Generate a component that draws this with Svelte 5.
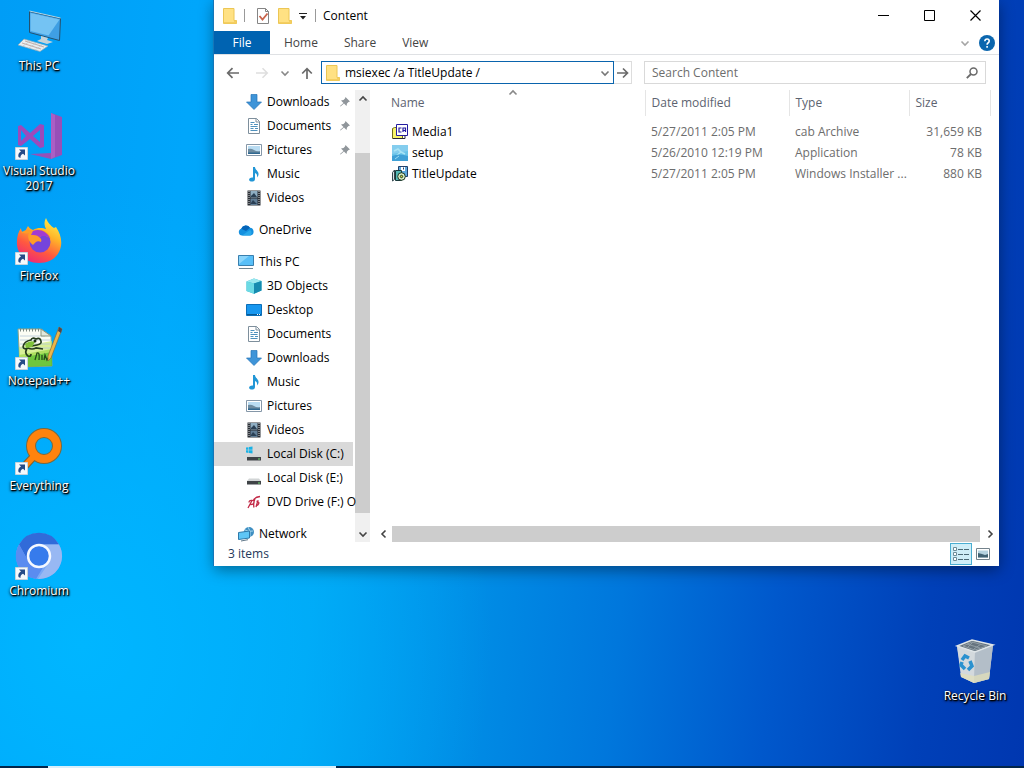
<script>
  let address = $state('msiexec /a TitleUpdate /');
  const shortcuts = [
    { icon: 'pc', label: 'This PC' },
    { icon: 'vs', label: 'Visual Studio 2017', link: true },
    { icon: 'firefox', label: 'Firefox', link: true },
    { icon: 'notepad', label: 'Notepad++', link: true },
    { icon: 'everything', label: 'Everything', link: true },
    { icon: 'chromium', label: 'Chromium', link: true }
  ];
  const groups = [
    [
      { icon: 'down', label: 'Downloads', sub: true, pin: true },
      { icon: 'doc', label: 'Documents', sub: true, pin: true },
      { icon: 'pic', label: 'Pictures', sub: true, pin: true },
      { icon: 'music', label: 'Music', sub: true },
      { icon: 'video', label: 'Videos', sub: true }
    ],
    [{ icon: 'cloud', label: 'OneDrive' }],
    [
      { icon: 'monitor', label: 'This PC' },
      { icon: 'cube', label: '3D Objects', sub: true },
      { icon: 'desktop', label: 'Desktop', sub: true },
      { icon: 'doc', label: 'Documents', sub: true },
      { icon: 'down', label: 'Downloads', sub: true },
      { icon: 'music', label: 'Music', sub: true },
      { icon: 'pic', label: 'Pictures', sub: true },
      { icon: 'video', label: 'Videos', sub: true },
      { icon: 'diskc', label: 'Local Disk (C:)', sub: true, current: true },
      { icon: 'disk', label: 'Local Disk (E:)', sub: true },
      { icon: 'dvd', label: 'DVD Drive (F:) O', sub: true }
    ],
    [{ icon: 'network', label: 'Network' }]
  ];
  const files = [
    { icon: 'cab', name: 'Media1', date: '5/27/2011 2:05 PM', type: 'cab Archive', size: '31,659 KB' },
    { icon: 'setup', name: 'setup', date: '5/26/2010 12:19 PM', type: 'Application', size: '78 KB' },
    { icon: 'msi', name: 'TitleUpdate', date: '5/27/2011 2:05 PM', type: 'Windows Installer ...', size: '880 KB' }
  ];
</script>

{#snippet folder()}
  <svg width="16" height="16" viewBox="0 0 16 16" aria-hidden="true">
    <path d="M1.500 .5h10.500v12h2.500v3h-13z" fill="#ffe183" stroke="#ecc654" />
    <path d="M12 12.500h2.500v3H12zM2 14h10v1.500H2z" fill="#f4ce61" />
  </svg>
{/snippet}

{#snippet glyph(name)}
  <svg class="glyph" width="16" height="16" viewBox="0 0 16 16" aria-hidden="true">
    {#if name === 'down'}
      <path d="M5 .5h6V8h4.500L8 15.500.5 8H5z" fill="#3e94d8" stroke="#2474b8" stroke-width=".7" />
    {:else if name === 'doc'}
      <path d="M2.500 .5h8l3 3v12h-11z" fill="#fff" stroke="#7e8f9c" />
      <path d="M10 .5v3.500h3.500" fill="none" stroke="#7e8f9c" />
      <path d="M4.500 4.500h4M4.500 6.500h2M8 6.500h4M4.500 8.500h7M4.500 10.500h3M9 10.500h3M4.500 12.500h7" stroke="#4f91bd" />
    {:else if name === 'pic'}
      <path d="M.5 2.500h15v11H.5z" fill="#fff" stroke="#8597a8" />
      <path d="M2 4h12v8H2z" fill="#b9dcf2" />
      <path d="M2 7q3-1 6 1t6 1v3H2z" fill="#6d8ba0" />
      <path d="M2 10.500h12V12H2z" fill="#2f6790" />
    {:else if name === 'music'}
      <path d="M7 1h2c0 3 4 4 3.500 7.500 0 1-.5 2-1.500 3 .5-2.500-.5-4-2-4.500v6c0 2-2 2.800-4 2.500-2-.3-2.500-2-1.200-3.200 1-.9 2.200-1 3.200-.8z" fill="#2196d6" />
    {:else if name === 'video'}
      <path d="M1.500 .5h13v15h-13z" fill="#2a2e35" />
      <path d="M4.500 1h7v6.500h-7z" fill="#8eadc2" />
      <path d="M4.500 8.500h7V15h-7z" fill="#607d96" />
      <path d="M5 6l3-3 3 4H5zM5 13l2-3 4 4H5z" fill="#293f54" />
      <path d="M3 1v14M13 1v14" stroke="#d0d6db" stroke-dasharray="1 1" />
    {:else if name === 'cloud'}
      <path d="M4 13.500a3.500 3.500 0 0 1-.8-6.800A5 5 0 0 1 12 5.800a3.900 3.900 0 0 1 .5 7.700z" fill="#1490df" />
      <path d="M3.200 6.700A5 5 0 0 1 12 5.800L8 9z" fill="#0564b8" />
      <path d="M4 13.500l8-5.500a3.500 3.500 0 0 1 .5 5.500z" fill="#28a8ea" />
    {:else if name === 'monitor'}
      <path d="M.5 1.500h15v10H.5z" fill="#58bff8" stroke="#397fae" />
      <path d="M1 2h10L1 10z" fill="#8bd5fb" />
      <path d="M1 14h14v1H1z" fill="#6f8592" />
    {:else if name === 'cube'}
      <path d="M.5 3.500L8 .5l7.500 2.500v9.500L8 15.800.5 13z" fill="#2fb6cf" />
      <path d="M.5 3.500L8 .5l7.500 2.500L8 5.500z" fill="#9ce9ef" />
      <path d="M.5 3.500L8 5.500v10.300L.5 13z" fill="#6cdae4" />
      <path d="M8 5.500L15.500 3v9.500L8 15.800z" fill="#168baf" />
    {:else if name === 'desktop'}
      <path d="M.5 2.500h15v11H.5z" fill="#1897ef" stroke="#0b6eb8" />
      <path d="M1 12h14v1H1z" fill="#075993" />
      <path d="M11 12h1v1h-1zM13 12h1v1h-1z" fill="#fff" />
    {:else if name === 'diskc' || name === 'disk'}
      {#if name === 'diskc'}
        <path d="M0 1.500l2.500-.3v2.600H0zM3 1l3.500-.5v3.300H3zM0 4.300h2.500v2.600L0 6.600zM3 4.300h3.500v3.300L3 7z" fill="#18b2e6" />
      {/if}
      <path d="M3 8.500h10l2 2.500H1z" fill="#d2d5d6" />
      <path d="M1 11h14v3.500H1z" fill="#3f4347" />
      <path d="M12 12.500h2v1h-2z" fill="#6fe070" />
    {:else if name === 'dvd'}
      <path d="M14 2.500c-4 .5-6 2-7 4.500M2 14l4-7.500q-3-.5-3 2M4.500 10.500q4 0 3.500-3M9 4.500q-2 5-1 9M10 13l1.500-5q2 0 1 2t-2 1M12.500 6.500l-2 1" fill="none" stroke="#c22846" stroke-width="1.300" />
    {:else if name === 'network'}
      <circle cx="11" cy="6" r="5" fill="#3f8fc2" />
      <path d="M7 4q4 2 8 1M10 1q3 4 2 9" fill="none" stroke="#a5d7ef" />
      <path d="M.5 6.500l11-1.500v7l-11 1.500z" fill="#5fc6f6" stroke="#2e79a9" />
      <path d="M3 15l7-1.300" stroke="#60788a" />
    {:else if name === 'cab'}
      <path d="M.5 4.500l2-1h8v11H.5z" fill="#f7f36a" stroke="#6f6c1c" />
      <path d="M4.500 .5h11v11h-11z" fill="#fff" stroke="#241ca0" />
      <path d="M9.500 4H7v4h2.500M11 8V4h2.500v4M11 6.500h2.500" fill="none" stroke="#241ca0" stroke-width="1.200" />
      <path d="M1 14.500h12v-3" fill="none" stroke="#25243a" />
    {:else if name === 'setup'}
      <path d="M0 0h16v16H0z" fill="#68c3e8" />
      <path d="M0 0h16v6L0 9z" fill="#84cdee" />
      <path d="M2 6l4-2 3 3 4 2M4 11l5-4" fill="none" stroke="#a9e4f5" stroke-width="1.600" />
      <path d="M0 11q7-3 16 0v5H0z" fill="#3fa0d6" />
      <path d="M3 14l4-3" stroke="#9adcf2" />
    {:else if name === 'msi'}
      <path d="M6.500 .5h9v10h-9z" fill="#5da9dd" stroke="#20406b" />
      <path d="M9 1h4v4H9z" fill="#fff" />
      <path d="M11 1.500h1v2h-1z" fill="#20406b" />
      <path d="M.5 6.500L2.500 4v9.500L.5 15z" fill="#dce3e5" stroke="#35484f" />
      <path d="M3.500 4.500h6v10h-6z" fill="#53b8b4" stroke="#19383b" />
      <circle cx="9.500" cy="10.500" r="3.800" fill="#d9ecc2" stroke="#1c3826" />
      <circle cx="9.500" cy="10.500" r="1.200" fill="#d5db38" stroke="#1c3826" />
    {/if}
  </svg>
{/snippet}

{#snippet big(name)}
  <svg width="48" height="48" viewBox="0 0 48 48" aria-hidden="true">
    {#if name === 'pc'}
      <path d="M14.500 4.500l31 7-1 22-30-8z" fill="#3f9fe4" stroke="#24516f" />
      <path d="M15.500 6l29 6.500-11 16-18-4.500z" fill="#74c3f3" />
      <path d="M14.500 4l31 7" stroke="#b2d6e7" />
      <path d="M26 29l7 2-1 2 6 2-6 2-10-3 4-2z" fill="#c6d3d9" />
      <path d="M9 32l24 7-8 5.500L3 38z" fill="#e8edf0" stroke="#91a9b5" stroke-width=".7" />
      <path d="M10 34l19 6M7 36l19 6" stroke="#b58f86" stroke-width=".7" />
      <path d="M15 34l-7 5M21 36l-7 5M27 38l-7 5" stroke="#b9c6cd" stroke-width=".7" />
    {:else if name === 'vs'}
      <path d="M36 1l11 4v38l-11 4-21-5 21-1z" fill="#9650b8" />
      <path d="M3 14l3-1 9 8 10-9 4 1v22l-4 1-10-9-9 7-3-1zM6 18v11l5-5zM18 24l7 6V18z" fill="#9b4bbb" fill-rule="evenodd" />
      <path d="M36 1v46l4-2V3z" fill="#aa5fc4" />
    {:else if name === 'firefox'}
      <defs>
        <linearGradient id="flame" x1=".8" y1="0" x2=".3" y2="1">
          <stop offset="0" stop-color="#fff04c" /><stop offset=".35" stop-color="#ffb428" />
          <stop offset=".68" stop-color="#ff593f" /><stop offset="1" stop-color="#ee2877" />
        </linearGradient>
      </defs>
      <path d="M31 1c2 5 4 7 8 10l2-1c4 6 6 12 5 19-2 11-11 17-22 17S3 39 2 28c-.5-7 1-13 4-17 0 2 1 4 3 5l4-7c1 2 3 3 5 4 5-3 10-2 13-1-2-4-2-7 0-11z" fill="url(#flame)" />
      <circle cx="25" cy="25" r="10.500" fill="#7544db" />
      <path d="M17 14c8-4 17 1 19 8-4-4-8-4-12-2 2 1 3 3 2 5-4-2-6 1-8 3-4-3-6-8-4-12-3 1-6 0-8 0 3-3 7-4 11-2z" fill="#ff9c27" />
      <path d="M18 14c7-3 14 1 17 7-4-3-8-2-11-1-2-2-5-2-8-2z" fill="#a23bd1" />
    {:else if name === 'notepad'}
      <path d="M3 7h23l10 7 1 30-32 1z" fill="#fbfdf4" stroke="#8fa388" />
      <path d="M4 33l33-6v17l-32 1z" fill="#5fc02b" opacity=".9" />
      <path d="M4 25l33-6v11L4 36z" fill="#c9e971" opacity=".7" />
      <path d="M5 14h25M5 18h30M5 22h30M5 26h30" stroke="#b5c6d8" stroke-width=".8" />
      <path d="M5 8h21" stroke="#7d8a83" stroke-width="3" stroke-dasharray="1 2" />
      <path d="M26 7v7h10z" fill="#e2e8dc" stroke="#8a957f" />
      <path d="M8 25q1-6 8-7 1-3 5-1 4-2 5 2 1 3-4 4-7 2-11-1M8 25q1 3 5 1 4 2 8 0l7 1M12 27q-3 4 1 7 3 1 3-2" fill="none" stroke="#243b1d" stroke-width="1.700" />
      <path d="M10 22q5-4 10-2l-3 5-6 1z" fill="#7fc23a" />
      <circle cx="20" cy="19" r="1.500" fill="#172d13" />
      <path d="M20 38l2-7q3-1 2 7m3 0v-5m2 5l1-5 2 5 3-5" fill="none" stroke="#234a1a" stroke-width="1.300" />
      <path d="M44 5l3 2-11 29-3 3v-5z" fill="#ecb64a" stroke="#8a6a38" stroke-width=".7" />
      <path d="M44 5l3 2-1 4-3-2z" fill="#4d4450" />
    {:else if name === 'everything'}
      <path d="M20 28l-12 13" stroke="#7e6033" stroke-width="8" stroke-linecap="round" />
      <circle cx="29" cy="19" r="13" fill="none" stroke="#776940" stroke-width="10" />
      <path d="M20 28l-12 13" stroke="#ff830d" stroke-width="6" stroke-linecap="round" />
      <circle cx="29" cy="19" r="13" fill="none" stroke="#ff830d" stroke-width="8" />
    {:else if name === 'chromium'}
      <circle cx="24" cy="24" r="23" fill="#7ba8f5" />
      <path d="M4 12.500A23 23 0 0 1 44 12.500H24a12 12 0 0 0-10.400 17.500z" fill="#316bd9" />
      <path d="M4 12.500l10 17.500a12 12 0 0 0 14 5.400L21 47A23 23 0 0 1 4 12.500z" fill="#5a8cf0" />
      <path d="M44 12.500A23 23 0 0 1 23 47l11.400-17A12 12 0 0 0 24 12.500z" fill="#98b8f3" />
      <circle cx="24" cy="24" r="11" fill="#367bec" stroke="#f4f8ff" stroke-width="2.500" />
    {:else if name === 'bin'}
      <path d="M6 9l15-6 21 5-4 34-15 4-12-6z" fill="#c5cdd2" />
      <path d="M6 9l18 6-1 31-13-6z" fill="#d3d9dd" />
      <path d="M24 15l18-7-4 34-15 4z" fill="#b3bec8" />
      <path d="M6 9l15-6 21 5-18 7z" fill="#66747f" stroke="#dfe5e8" stroke-width="1.500" />
      <path d="M12 9l9-4 15 4-12 4zM16 7l13 4M22 5l-6 6M30 7l-7 5" fill="none" stroke="#909da6" />
      <path d="M9 36l14 3 16-4-1 7-15 4-13-6z" fill="#e2dfba" opacity=".75" />
      <path d="M11 23l3-4 4 2M19 24l2 5-4 4M14 32l-4-4 1-3" fill="none" stroke="#2a91cf" stroke-width="3.500" />
    {/if}
  </svg>
{/snippet}

{#snippet chevron(direction)}
  <svg class={direction} width="10" height="10" viewBox="0 0 10 10" aria-hidden="true"><path d="M1.500 3.500L5 7l3.500-3.500" fill="none" stroke="currentColor" stroke-width="1.600" /></svg>
{/snippet}

<main class="screen">
  <nav class="shortcuts" aria-label="Desktop">
    {#each shortcuts as item}
      <button class="shortcut">
        <span class="picture">
          {@render big(item.icon)}
          {#if item.link}
            <svg class="badge" width="13" height="13" viewBox="0 0 13 13" aria-hidden="true">
              <path d="M.5 .5h12v12H.5z" fill="#f5f9fc" stroke="#c5d3dd" />
              <path d="M4 2.500h6v6L8 6.700Q5 8 5.500 11L3.500 10Q2.500 6.500 6 4.600z" fill="#254b87" />
            </svg>
          {/if}
        </span>
        <span class="caption">{item.label}</span>
      </button>
    {/each}
  </nav>
  <button class="shortcut recycle">
    <span class="picture">{@render big('bin')}</span>
    <span class="caption">Recycle Bin</span>
  </button>

  <section class="window" aria-label="Content">
    <header class="title">
      {@render folder()}
      <i class="rule"></i>
      <button aria-label="Properties" class="quick">
        <svg width="14" height="16" viewBox="0 0 14 16"><path d="M1.500 .5h8l3 3v12h-11z" fill="#fff" stroke="#858585" /><path d="M9.500 .5v3h3" fill="none" stroke="#858585" /><path d="M3.500 8l3 3.500 5-6" fill="none" stroke="#c9644b" stroke-width="1.800" /></svg>
      </button>
      <button aria-label="New folder" class="quick second">{@render folder()}</button>
      <button aria-label="Customize" class="quick custom">
        <svg width="8" height="8" viewBox="0 0 8 8"><path d="M0 1h8v1H0zM1 4h6L4 7.500z" fill="#222" /></svg>
      </button>
      <i class="rule near"></i>
      <h1>Content</h1>
      <div class="controls">
        <button aria-label="Minimize"><svg width="11" height="11" viewBox="0 0 11 11"><path d="M0 5.500h11" stroke="#000" /></svg></button>
        <button aria-label="Maximize"><svg width="11" height="11" viewBox="0 0 11 11"><path d="M.5 .5h10v10H.5z" fill="none" stroke="#000" /></svg></button>
        <button aria-label="Close"><svg width="11" height="11" viewBox="0 0 11 11"><path d="M.5 .5l10 10M10.500 .5l-10 10" stroke="#000" stroke-width="1.200" /></svg></button>
      </div>
    </header>

    <div class="ribbon">
      <button class="file">File</button>
      <button>Home</button>
      <button>Share</button>
      <button>View</button>
      <button class="expand" aria-label="Expand the ribbon">{@render chevron('open')}</button>
      <button class="help" aria-label="Help"><svg width="16" height="16" viewBox="0 0 16 16"><circle cx="8" cy="8" r="8" fill="#0b66ae" /><path d="M5.800 6.200Q6 4 8.100 4t2.100 2.100Q10.200 7.300 9 8q-.9.600-.9 1.700M8.100 11v1.700" fill="none" stroke="#fff" stroke-width="1.600" /></svg></button>
    </div>

    <div class="tools">
      <div class="history">
        <button aria-label="Back"><svg width="14" height="12" viewBox="0 0 14 12"><path d="M13 6H2M6.500 1.200L1.700 6l4.800 4.800" fill="none" stroke="#6a6a6a" stroke-width="1.700" /></svg></button>
        <button aria-label="Forward"><svg width="14" height="12" viewBox="0 0 14 12"><path d="M1 6h11M7.500 1.200L12.300 6l-4.800 4.800" fill="none" stroke="#dedede" stroke-width="1.500" /></svg></button>
        <button class="recent" aria-label="Recent locations">{@render chevron('open')}</button>
        <button aria-label="Up"><svg width="12" height="12" viewBox="0 0 12 12"><path d="M6 12V2M1.200 6.500L6 1.700l4.800 4.800" fill="none" stroke="#6a6a6a" stroke-width="1.700" /></svg></button>
      </div>
      <div class="address">
        {@render folder()}
        <input aria-label="Address" bind:value={address} />
        <button aria-label="Previous locations">{@render chevron('open')}</button>
      </div>
      <button class="go" aria-label="Go"><svg width="12" height="12" viewBox="0 0 12 12"><path d="M0 6h10M6 1.500L10.500 6 6 10.500" fill="none" stroke="#6a6a6a" stroke-width="1.700" /></svg></button>
      <div class="search">
        <input aria-label="Search Content" placeholder="Search Content" />
        <svg width="12" height="12" viewBox="0 0 12 12" aria-hidden="true"><circle cx="7.500" cy="4.500" r="3.500" fill="none" stroke="#6a6a6a" stroke-width="1.500" /><path d="M5 7L.8 11.200" stroke="#6a6a6a" stroke-width="1.800" /></svg>
      </div>
    </div>

    <div class="body">
      <nav class="tree" aria-label="Folders">
        {#each groups as group}
          <ul>
            {#each group as item}
              <li>
                <button class="node" class:sub={item.sub} class:current={item.current}>
                  {@render glyph(item.icon)}
                  <span>{item.label}</span>
                  {#if item.pin}
                    <svg class="pin" width="10" height="10" viewBox="0 0 10 10" aria-hidden="true"><path d="M5.500 0L10 4.500 8.500 5 7 6.500 6.500 9 4 6.500.5 9.500 0 9 3.500 6 1 3.500 3.500 3 5 1.500z" fill="#90969b" /></svg>
                  {/if}
                </button>
              </li>
            {/each}
          </ul>
        {/each}
      </nav>
      <div class="vbar">
        <button aria-label="Scroll up">{@render chevron('up')}</button>
        <i class="thumb"></i>
        <button aria-label="Scroll down">{@render chevron('open')}</button>
      </div>
      <div class="content">
        <table>
          <colgroup><col /><col class="date" /><col class="type" /><col class="size" /><col class="rest" /></colgroup>
          <thead>
            <tr>
              <th>Name<span class="sort">{@render chevron('up')}</span></th>
              <th>Date modified</th><th>Type</th><th>Size</th><td></td>
            </tr>
          </thead>
          <tbody>
            {#each files as file}
              <tr>
                <td class="name"><span>{@render glyph(file.icon)}{file.name}</span></td>
                <td>{file.date}</td><td>{file.type}</td><td class="amount">{file.size}</td><td></td>
              </tr>
            {/each}
          </tbody>
        </table>
        <div class="hbar">
          <button aria-label="Scroll left">{@render chevron('left')}</button>
          <i class="thumb"></i>
          <button aria-label="Scroll right">{@render chevron('right')}</button>
        </div>
      </div>
    </div>

    <footer>
      <span>3 items</span>
      <button class="view on" aria-label="Details view"><svg width="18" height="16" viewBox="0 0 18 16"><path d="M1.500 1.500h3v3h-3zM1.500 6.500h3v3h-3zM1.500 11.500h3v3h-3z" fill="#fff" stroke="#6e8c98" /><path d="M6 3.500h5M12 3.500h5M6 8.500h5M12 8.500h5M6 13.500h5M12 13.500h5" stroke="#4b6975" /></svg></button>
      <button class="view" aria-label="Large icons view"><svg width="14" height="12" viewBox="0 0 14 12"><path d="M.5 .5h13v11H.5z" fill="#fff" stroke="#74838c" /><path d="M2 2.500h10v7H2z" fill="#b5d2df" /><path d="M2 5l4 1 3 1 3-1v3.500H2z" fill="#416273" /></svg></button>
    </footer>
  </section>

  <div class="taskbar"><i></i></div>
</main>

<style>
  :global(body) { margin: 0; }
  .screen {
    position: relative;
    min-height: 100vh;
    overflow: hidden;
    display: flex;
    flex-direction: column;
    justify-content: space-between;
    background:
      radial-gradient(ellipse 40% 60% at 8% 84%, #00b6ff 0%, #00b6ff00 100%),
      linear-gradient(96deg, #009df6 0%, #00a6fb 18%, #00a4f2 34%, #008ee6 48%, #0077dc 62%, #0058cc 76%, #0040b8 90%, #0037b0 100%);
    font-family: "Open Sans", "Noto Sans", sans-serif;
    font-size: 12px;
    line-height: 16px;
    color: #1a1a1a;
  }
  button, input { font: inherit; color: inherit; border: 0; padding: 0; margin: 0; background: none; }
  button { display: flex; align-items: center; justify-content: center; }
  svg { display: block; flex: none; }
  ul { list-style: none; margin: 0; padding: 0; }

  .shortcuts { display: grid; grid-auto-rows: 105px; width: 78px; padding-top: 7px; }
  .shortcut { flex-direction: column; justify-content: flex-start; width: 78px; color: #fff; }
  .picture { position: relative; margin-bottom: 3px; }
  .badge { position: absolute; left: 0; bottom: 0; }
  .caption { line-height: 15px; text-shadow: 1px 1px 1px #000, 1px 1px 2px #000, 0 1px 3px #000; }
  .recycle { position: absolute; right: 10px; bottom: 65px; }

  .window {
    position: absolute;
    left: 214px;
    right: 25px;
    top: 0;
    background: #fff;
    display: flex;
    flex-direction: column;
    box-shadow: -1px 0 0 #1676b8, 0 4px 14px #0006;
  }
  .title { display: flex; align-items: center; height: 31px; padding: 0 1px 0 8px; }
  .rule { width: 1px; height: 13px; background: #999; margin: 0 11px 0 6px; }
  .near { margin: 0 7px 0 8px; }
  .quick { height: 20px; }
  .second { margin: 0 6px 0 7px; }
  h1 { font-size: 12px; font-weight: 400; margin: 0; color: #000; }
  .controls { display: flex; margin-left: auto; }
  .controls button { width: 46px; height: 30px; }

  .ribbon { display: flex; height: 23px; border-bottom: 1px solid #dfe1e4; color: #444; }
  .ribbon button { padding: 0 13px; }
  .ribbon .file { width: 56px; background: #0063b1; color: #fff; margin-right: 1px; }
  .ribbon .expand { margin-left: auto; padding: 0 5px; color: #a5a5a5; }
  .ribbon .help { padding: 0 4px; }

  .tools {
    display: grid;
    grid-template-columns: 107px minmax(0, 293fr) 30px minmax(0, 342fr);
    align-items: center;
    padding: 6px 13px 6px 0;
  }
  .history { display: flex; align-items: center; gap: 15px; padding-left: 12px; }
  .recent { margin: 0 -4px; color: #888; }
  .address, .search { display: flex; align-items: center; box-sizing: border-box; height: 23px; }
  .address { border: 1px solid #0a64ad; padding-left: 3px; color: #000; }
  .address input { flex: 1; min-width: 0; margin-left: 4px; outline: 0; }
  .address button { width: 16px; height: 20px; color: #777; }
  .go { width: 18px; height: 23px; border: 1px solid #ddd; border-left: 0; box-sizing: border-box; }
  .search { border: 1px solid #d9d9d9; padding: 0 7px; }
  .search input { flex: 1; min-width: 0; outline: 0; }
  .search input::placeholder { color: #6d6d6d; opacity: 1; }

  .body { display: flex; }
  .tree { position: relative; z-index: 1; width: 139px; flex: none; margin-bottom: -4px; }
  .tree ul + ul { margin-top: 8px; }
  .node { width: 100%; height: 24px; justify-content: flex-start; gap: 5px; padding-left: 24px; color: #000; }
  .sub { padding-left: 32px; }
  .current { background: #d9d9d9; }
  .node span { flex: 1; min-width: 0; text-align: left; white-space: nowrap; }
  .pin { margin-right: 3px; }
  .vbar { display: flex; flex-direction: column; width: 15px; margin: 0 1px 0 2px; background: #f0f0f0; color: #444; }
  .vbar button { height: 17px; }
  .vbar .thumb { flex: 1; margin-top: 46px; margin-bottom: 12px; background: #cdcdcd; }
  .up { transform: rotate(180deg); }
  .left { transform: rotate(90deg); }
  .right { transform: rotate(-90deg); }

  .content { flex: 1; min-width: 0; display: flex; flex-direction: column; justify-content: space-between; }
  table { width: 100%; table-layout: fixed; border-collapse: collapse; }
  .date { width: 144px; }
  .type { width: 120px; }
  .size { width: 81px; }
  .rest { width: 9px; }
  th { position: relative; height: 26px; padding: 0 6px; font-weight: 400; text-align: left; color: #5c6370; border-right: 1px solid #e5e5e5; }
  th:first-child { padding-left: 20px; }
  .sort { position: absolute; left: 50%; top: -2px; color: #888; }
  tbody td { height: 21px; padding: 0 0 0 6px; color: #6d6d6d; white-space: nowrap; }
  tbody tr:first-child td { padding-top: 5px; }
  tbody .name { padding-left: 21px; color: #000; }
  .name span { display: flex; align-items: center; gap: 4px; }
  tbody .amount { text-align: right; padding-right: 8px; }
  .hbar { display: flex; height: 16px; background: #f0f0f0; color: #444; margin-left: 4px; }
  .hbar button { width: 17px; background: #fff; }
  .hbar button:last-child { width: 19px; }
  .hbar .thumb { flex: 1; background: #cdcdcd; }

  footer { display: flex; align-items: center; height: 24px; padding: 0 5px 0 14px; color: #1e395b; }
  footer span { flex: 1; }
  .view { width: 22px; height: 22px; }
  .on { background: #cfeef8; box-shadow: inset 0 0 0 1px #4aaed2; }

  .taskbar { height: 2px; background: #02254a; display: flex; padding-left: 48px; }
  .taskbar i { width: 288px; background: #d9effb; }
</style>
